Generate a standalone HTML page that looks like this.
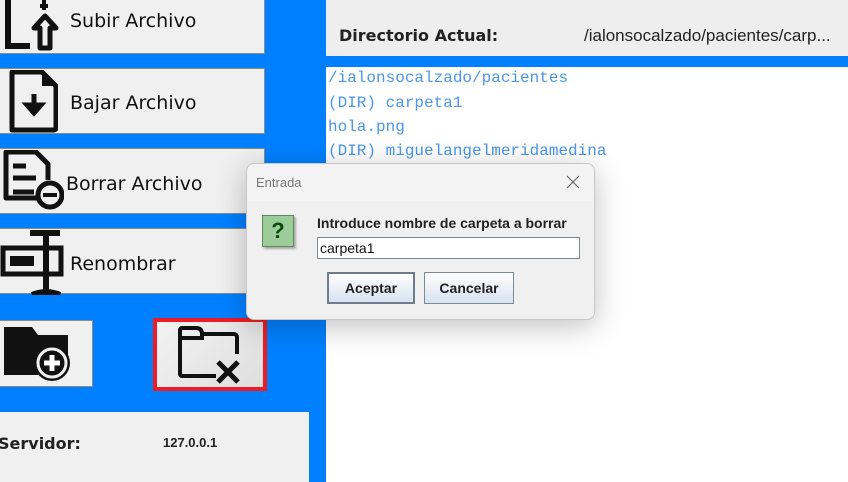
<!DOCTYPE html>
<html style="overflow:hidden;width:848px;height:482px"><head><meta charset="utf-8"><style>
*{margin:0;padding:0;box-sizing:border-box}
body{width:848px;height:482px;overflow:hidden;background:#0080ff;position:relative;font-family:"DejaVu Sans","Liberation Sans",sans-serif}
.btn{position:absolute;background:#f0f0f0;border:1px solid #8a8a8a}
.lbl{position:absolute;font-size:19px;color:#111;white-space:nowrap}
.abs{position:absolute}
.mono{font-family:"Liberation Mono",monospace;font-size:16px;color:#4a97ea;position:absolute;left:328px;white-space:nowrap}
</style></head><body>
<div class="btn" style="left:-1px;top:-2px;width:266px;height:56px"></div>
<svg class="abs" style="left:4px;top:0" width="58" height="54" viewBox="0 0 58 54"><path d="M4 0V46H26" fill="none" stroke="#111" stroke-width="6"/><path d="M40 0V10M36 6H44" stroke="#111" stroke-width="4"/><path d="M41 16L52 28H46V48H36V28H30Z" fill="none" stroke="#111" stroke-width="5" stroke-linejoin="round"/></svg>
<div class="lbl" style="left:70px;top:10px">Subir Archivo</div>

<div class="btn" style="left:-1px;top:68px;width:266px;height:66px"></div>
<svg class="abs" style="left:8px;top:70px" width="50" height="64" viewBox="0 0 50 64"><path d="M4 2H34L48 16V58a2 2 0 0 1-2 2H4z" fill="none" stroke="#111" stroke-width="5" stroke-linejoin="round"/><path d="M34 2V16H48" fill="#111"/><path d="M26 24V40M19 35L26 43 33 35Z" stroke="#111" stroke-width="5" fill="#111"/></svg>
<div class="lbl" style="left:70px;top:92px">Bajar Archivo</div>

<div class="btn" style="left:-1px;top:148px;width:266px;height:66px"></div>
<svg class="abs" style="left:2px;top:150px" width="62" height="62" viewBox="0 0 62 62"><path d="M38 48H4V2H34L46 14V30" fill="none" stroke="#111" stroke-width="5" stroke-linejoin="round"/><path d="M11 16H24M11 28H34M11 42H32" stroke="#111" stroke-width="5"/><circle cx="48" cy="45" r="12" fill="#f0f0f0" stroke="#111" stroke-width="5"/><path d="M41 45H55" stroke="#111" stroke-width="4"/></svg>
<div class="lbl" style="left:66px;top:173px">Borrar Archivo</div>

<div class="btn" style="left:-1px;top:228px;width:266px;height:66px"></div>
<svg class="abs" style="left:0;top:229px" width="66" height="66" viewBox="0 0 66 66"><path d="M30 4H60M32 66Q46 60 60 66M46 4V62" stroke="#111" stroke-width="6" fill="none"/><rect x="3" y="19" width="58" height="26" fill="none" stroke="#111" stroke-width="5"/><rect x="10" y="27" width="24" height="10" fill="#111"/></svg>
<div class="lbl" style="left:70px;top:253px">Renombrar</div>

<div class="btn" style="left:-1px;top:320px;width:94px;height:67px"></div>
<svg class="abs" style="left:4px;top:327px" width="66" height="56" viewBox="0 0 66 56"><path d="M0 0H28L34 8H64V28H34V48H0Z" fill="#111"/><circle cx="48" cy="36" r="18" fill="#111"/><circle cx="48" cy="36" r="14" fill="#111" stroke="#f0f0f0" stroke-width="3"/><path d="M48 28V44M40 36H56" stroke="#fff" stroke-width="5"/></svg>

<div class="abs" style="left:153px;top:318px;width:114px;height:73px;border:4px solid #ee1c25;background:linear-gradient(135deg,#f2f2f2,#dedede)"></div>
<svg class="abs" style="left:176px;top:326px" width="70" height="58" viewBox="0 0 70 58"><path d="M40 50H6a2 2 0 0 1-2-2V4a2 2 0 0 1 2-2H20Q26 2 26 8V12H6M26 8H58a3 3 0 0 1 3 3V28" fill="none" stroke="#111" stroke-width="4"/><path d="M42 36L62 56M62 36L42 56" stroke="#111" stroke-width="5"/></svg>

<div class="abs" style="left:0;top:412px;width:309px;height:70px;background:#f0f0f0"></div>
<div class="abs" style="left:-2px;top:434px;font-size:16px;font-weight:bold;color:#222">Servidor:</div>
<div class="abs" style="left:163px;top:435px;font-size:13px;font-weight:bold;font-family:'Liberation Sans',sans-serif;color:#222">127.0.0.1</div>

<div class="abs" style="left:326px;top:0;width:522px;height:56px;background:#eeeeee"></div>
<div class="abs" style="left:339px;top:26px;font-size:16px;font-weight:bold;color:#222">Directorio Actual:</div>
<div class="abs" style="left:584px;top:26px;font-size:17px;font-family:'Liberation Sans',sans-serif;color:#222">/ialonsocalzado/pacientes/carp...</div>
<div class="abs" style="left:326px;top:67px;width:522px;height:415px;background:#fff"></div>
<div class="mono" style="top:69px">/ialonsocalzado/pacientes</div>
<div class="mono" style="top:94px">(DIR) carpeta1</div>
<div class="mono" style="top:118px">hola.png</div>
<div class="mono" style="top:142px">(DIR) miguelangelmeridamedina</div>

<div class="abs" style="left:246px;top:163px;width:349px;height:157px;background:#f0f0f0;border:1px solid #c8c8c8;border-radius:8px;box-shadow:0 6px 30px rgba(0,0,0,.25);font-family:'Liberation Sans',sans-serif">
 <div style="height:37px;background:#f3f3f3;border-radius:8px 8px 0 0;position:relative">
  <span style="position:absolute;left:9px;top:11px;font-size:13px;color:#777">Entrada</span>
  <svg style="position:absolute;right:14px;top:11px" width="14" height="14"><path d="M1 1L13 13M13 1L1 13" stroke="#666" stroke-width="1.2"/></svg>
 </div>
 <div style="position:absolute;left:15px;top:51px;width:32px;height:32px;background:#9dcb9a;border:1px solid #5d8a5a;box-shadow:2px 2px 2px rgba(0,0,0,.3);text-align:center;font-weight:bold;font-size:22px;color:#0a4d0a;line-height:30px">?</div>
 <div style="position:absolute;left:70px;top:51px;font-size:14px;font-weight:bold;color:#222">Introduce nombre de carpeta a borrar</div>
 <div style="position:absolute;left:70px;top:73px;width:263px;height:22px;background:#fff;border:1px solid #7a8a9a;font-size:14px;line-height:20px;padding-left:2px;color:#111">carpeta1</div>
 <div style="position:absolute;left:80px;top:108px;width:88px;height:32px;border:2px solid #6d7b8c;background:linear-gradient(#fff,#d6e2ef);font-size:14px;font-weight:bold;text-align:center;line-height:28px;color:#222">Aceptar</div>
 <div style="position:absolute;left:177px;top:108px;width:90px;height:32px;border:1px solid #7c8a9a;background:linear-gradient(#fff,#d6e2ef);font-size:14px;font-weight:bold;text-align:center;line-height:30px;color:#222">Cancelar</div>
</div>
</body></html>
